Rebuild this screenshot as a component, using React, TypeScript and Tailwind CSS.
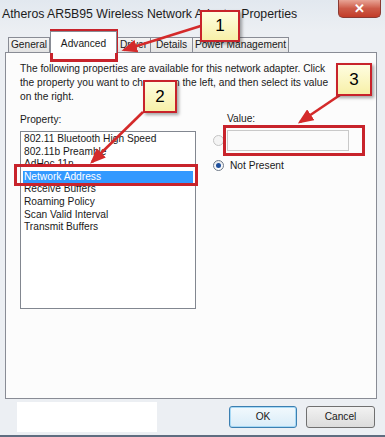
import React from "react";

const tabs = [
  { label: "General", w: "w-[42px]" },
  { label: "Advanced", w: "w-[67px]", active: true },
  { label: "Driver", w: "w-[35px]" },
  { label: "Details", w: "w-[43px]" },
  { label: "Power Management", w: "w-[97px]" },
];

const properties = [
  "802.11 Bluetooth High Speed",
  "802.11b Preamble",
  "AdHoc 11n",
  "Network Address",
  "Receive Buffers",
  "Roaming Policy",
  "Scan Valid Interval",
  "Transmit Buffers",
];

function Callout({ n, className }: { n: string; className: string }) {
  return (
    <div
      className={`absolute flex items-center justify-center border-2 border-[#c8232b] bg-gradient-to-b from-[#fffde0] to-[#f7f0a8] text-[17px] text-black shadow-[2px_2px_3px_rgba(0,0,0,0.35)] ${className}`}
    >
      {n}
    </div>
  );
}

function Radio({ checked, disabled }: { checked?: boolean; disabled?: boolean }) {
  return (
    <span
      className={`flex h-[11px] w-[11px] items-center justify-center rounded-full border ${
        disabled ? "border-[#c4c4c4] bg-[#f4f4f4]" : "border-[#6f7a88] bg-gradient-to-b from-[#e8eaed] to-white"
      }`}
    >
      {checked && <span className="h-[5px] w-[5px] rounded-full bg-[#1e4f9c]" />}
    </span>
  );
}

export default function App() {
  return (
    <div className="relative h-[437px] w-[385px] overflow-hidden bg-[#eceff3] font-['Liberation_Sans',Arial,sans-serif] text-[10.2px] text-[#1a1a1a]">
      {/* title bar */}
      <div className="flex h-[31px] items-start bg-gradient-to-b from-[#e2e8ef] to-[#eceff3]">
        <span className="pl-[2px] pt-[5px] text-[12.3px] text-[#1c1c1c]">
          Atheros AR5B95 Wireless Network Adapter Properties
        </span>
        <div className="ml-auto mr-[4px] flex h-[18px] w-[43px] items-center justify-center rounded-b-[5px] border border-t-0 border-[#8a3a33] bg-gradient-to-b from-[#e8a496] via-[#cc5a48] to-[#c23b28] text-[13px] font-bold text-white">
          ✕
        </div>
      </div>

      {/* tabs */}
      <div className="flex h-[21px] items-end pl-[8px]">
        {tabs.map((t) =>
          t.active ? (
            <div
              key={t.label}
              className={`${t.w} relative z-10 -mb-px flex h-[22px] items-start justify-center border border-b-0 border-[#898c95] bg-white pt-[4px]`}
            >
              {t.label}
            </div>
          ) : (
            <div
              key={t.label}
              className={`${t.w} -ml-px flex h-[15px] items-center justify-center border border-b-0 border-[#898c95] bg-gradient-to-b from-[#f4f4f4] to-[#e3e3e3] first:ml-0`}
            >
              {t.label}
            </div>
          )
        )}
      </div>

      {/* panel */}
      <div className="ml-[5px] h-[347px] w-[372px] border border-[#898c95] bg-[#fcfcfc] pl-[14px] pt-[9px]">
        <p className="w-[315px] leading-[14px]">
          The following properties are available for this network adapter. Click the property you want to change on the left, and then select its value on the right.
        </p>
        <div className="mt-[9px] flex">
          <div className="flex w-[176px] flex-col">
            <span className="leading-[14px]">Property:</span>
            <div className="mt-[4px] h-[178px] border border-[#828790] bg-white px-[2px] pt-px">
              {properties.map((p) => (
                <div
                  key={p}
                  className={`h-[12.6px] pl-[1px] leading-[12.6px] ${
                    p === "Network Address" ? "bg-[#3399ff] text-white" : ""
                  }`}
                >
                  {p}
                </div>
              ))}
            </div>
          </div>

          <div className="ml-[17px] flex flex-col">
            <span className="-mt-[1px] pl-[14px] leading-[14px]">Value:</span>
            <div className="mt-[4px] flex items-center gap-[3px]">
              <Radio disabled />
              <div className="h-[21px] w-[122px] border border-[#c9c9c9] bg-[#fbfbfb]" />
            </div>
            <div className="mt-[7px] flex items-center gap-[6px]">
              <Radio checked />
              <span>Not Present</span>
            </div>
          </div>
        </div>
      </div>

      {/* bottom buttons */}
      <div className="flex items-start pt-[3px]">
        <div className="ml-[17px] h-[30px] w-[140px] bg-white" />
        <div className="ml-[72px] mt-[4px] flex h-[22px] w-[68px] items-center justify-center rounded-[3px] border border-[#3c7fb1] bg-gradient-to-b from-[#f2f9fd] to-[#d9ecf8] shadow-[inset_0_0_0_1px_#a7d9f5]">
          OK
        </div>
        <div className="ml-[9px] mt-[4px] flex h-[22px] w-[69px] items-center justify-center rounded-[3px] border border-[#707070] bg-gradient-to-b from-[#f2f2f2] to-[#dcdcdc]">
          Cancel
        </div>
      </div>
      <div className="absolute bottom-0 left-0 h-[2px] w-full bg-[#5f6d80]" />

      {/* annotations */}
      <div className="absolute left-[50px] top-[29px] h-[33px] w-[68px] border-[3px] border-[#c8232b]" />
      <div className="absolute left-[14px] top-[164px] h-[22px] w-[184px] border-[3px] border-[#c8232b]" />
      <div className="absolute left-[223px] top-[125px] h-[31px] w-[142px] border-[3px] border-[#c8232b]" />

      <svg className="pointer-events-none absolute inset-0" width="385" height="437">
        <defs>
          <marker id="head" markerWidth="6" markerHeight="5" refX="5" refY="2.5" orient="auto" markerUnits="strokeWidth">
            <polygon points="0,0 6,2.5 0,5" fill="#d42a2a" />
          </marker>
        </defs>
        <line x1="207" y1="24" x2="124" y2="50" stroke="#d42a2a" strokeWidth="2.6" markerEnd="url(#head)" />
        <line x1="143" y1="112" x2="92" y2="162" stroke="#d42a2a" strokeWidth="2.6" markerEnd="url(#head)" />
        <line x1="340" y1="95" x2="300" y2="122" stroke="#d42a2a" strokeWidth="2.6" markerEnd="url(#head)" />
      </svg>

      <Callout n="1" className="left-[200px] top-[10px] h-[32px] w-[40px]" />
      <Callout n="2" className="left-[143px] top-[80px] h-[33px] w-[34px]" />
      <Callout n="3" className="left-[336px] top-[63px] h-[33px] w-[36px]" />
    </div>
  );
}
